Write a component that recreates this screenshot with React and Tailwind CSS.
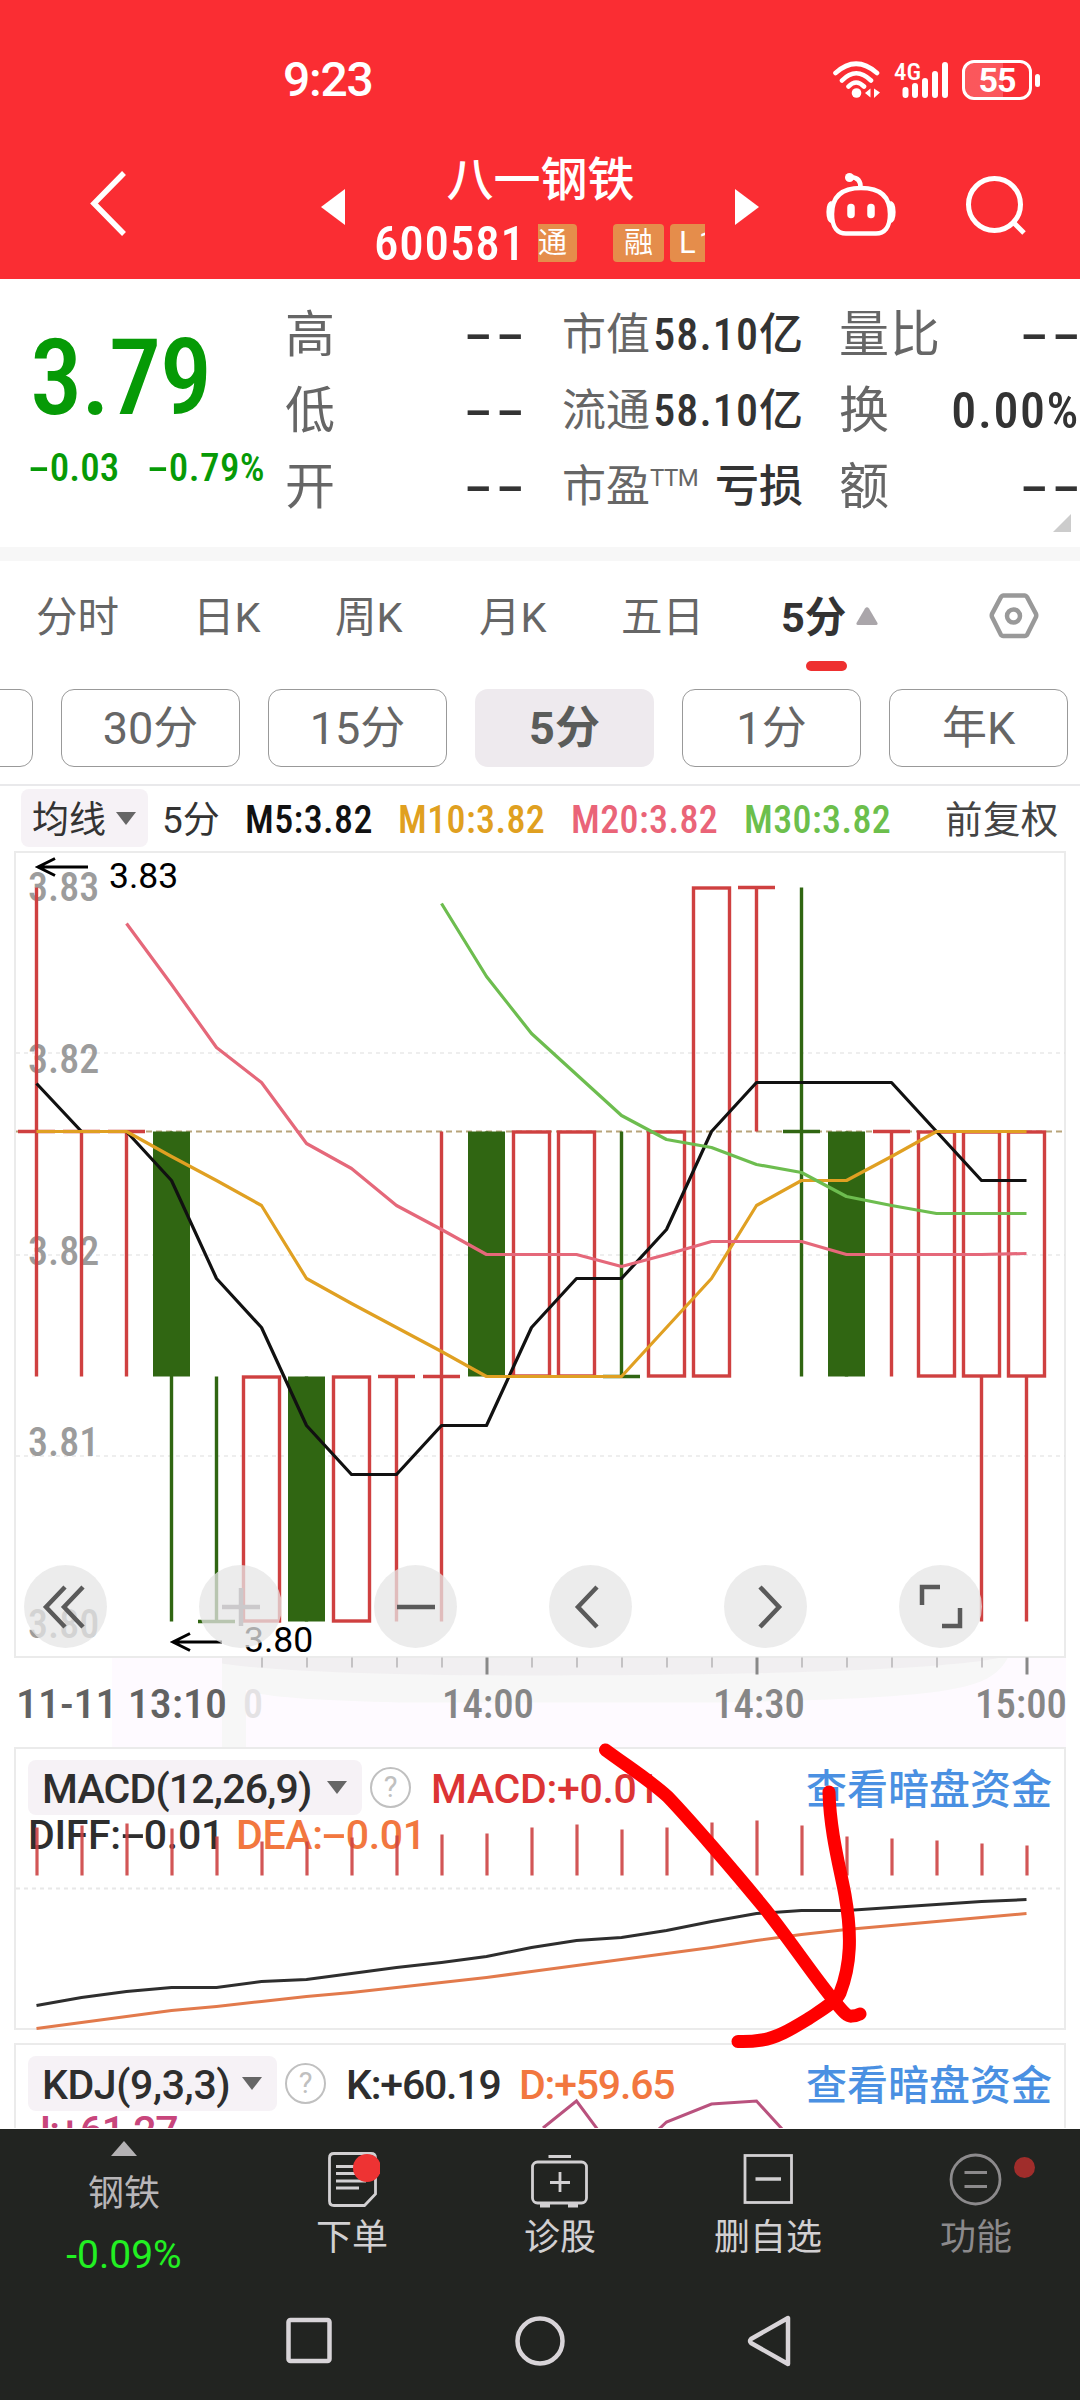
import React from "react";

const X = (i) => 36.5 + 45 * i;
const line = (start, ys) => ys.map((y, k) => `${X(start + k)},${y}`).join(" ");

// Price levels of the main chart, in chart pixels.
const P83 = 888;
const P82 = 1132;
const P81 = 1377;
const P80 = 1622;

// [kind, body top, body bottom, wick top, wick bottom]
const CANDLES = [
  ["redDash", P82, P82, P83, P81],
  ["redDash", P82, P82, P82, P81],
  ["redDash", P82, P82, P82, P81],
  ["green", P82, P81, P82, P80],
  ["greenDash", P80, P80, P81, P80],
  ["red", P81, P80, 0, 0],
  ["green", P81, P80, P81, P80],
  ["red", P81, P80, 0, 0],
  ["redDash", P81, P81, P81, P80],
  ["redDash", P81, P81, P82, P80],
  ["green", P82, P81, P82, P81],
  ["red", P82, P81, 0, 0],
  ["red", P82, P81, 0, 0],
  ["greenDash", P81, P81, P82, P81],
  ["red", P82, P81, 0, 0],
  ["red", P83, P81, 0, 0],
  ["redDash", P83, P83, P83, P82],
  ["greenDash", P82, P82, P83, P81],
  ["green", P82, P81, P82, P81],
  ["redDash", P82, P82, P82, P81],
  ["red", P82, P81, 0, 0],
  ["red", P82, P81, P81, P80],
  ["red", P82, P81, P81, P80],
];

const M5 = [1084, 1132, 1132, 1181, 1279, 1328, 1426, 1475, 1475, 1426, 1426, 1328, 1279, 1279, 1230, 1132, 1083, 1083, 1083, 1083, 1132, 1181, 1181];
const M10 = [1132, 1132, 1132, 1157, 1181, 1206, 1279, 1304, 1328, 1352, 1377, 1377, 1377, 1377, 1328, 1279, 1206, 1181, 1181, 1157, 1132, 1132, 1132];
const M20 = [924, 985, 1048, 1083, 1144, 1169, 1206, 1230, 1255, 1255, 1255, 1267, 1255, 1242, 1242, 1242, 1255, 1255, 1255, 1255, 1254];
const M30 = [904, 977, 1034, 1075, 1116, 1140, 1148, 1165, 1173, 1197, 1206, 1214, 1214, 1214];

const HIST = [1828, 1826, 1824, 1829, 1837, 1842, 1842, 1838, 1836, 1835, 1834, 1828, 1825, 1830, 1828, 1823, 1821, 1826, 1837, 1839, 1841, 1844, 1846];
const DIFF = [2006, 1998, 1992, 1988, 1988, 1982, 1980, 1974, 1968, 1963, 1957, 1948, 1941, 1938, 1931, 1922, 1914, 1911, 1911, 1908, 1905, 1902, 1900];
const DEA = [2029, 2023, 2017, 2011, 2007, 2002, 1997, 1993, 1988, 1983, 1978, 1972, 1966, 1960, 1954, 1948, 1941, 1935, 1930, 1926, 1922, 1918, 1914];

function Minus() {
  return (
    <span className="inline-block w-[0.56em] text-center">
      <span className="inline-block scale-x-[1.9]">-</span>
    </span>
  );
}

function Blank({ className = "" }) {
  return (
    <span className={`flex justify-between w-[54px] text-[48px] font-medium text-[#333] ${className}`}>
      <span className="w-[22px] text-center"><span className="inline-block scale-x-[2]">-</span></span>
      <span className="w-[22px] text-center"><span className="inline-block scale-x-[2]">-</span></span>
    </span>
  );
}

function Down({ className = "" }) {
  return (
    <svg className={className} width="20" height="13" viewBox="0 0 20 13">
      <path d="M0 0H20L10 13Z" fill="#666" />
    </svg>
  );
}

function StatusBar() {
  return (
    <div className="flex h-[160px] items-center pl-[283px] pr-[40px]">
      <span className="text-[48px] font-medium leading-none tracking-[-1.2px] [font-stretch:100%]">9:23</span>
      <div className="ml-auto flex items-center">
        <svg width="48" height="38" viewBox="832 60 48 38" fill="none" stroke="#fff" strokeWidth="4.6" strokeLinecap="round">
          <path d="M834.5 72Q855 53.500 876 72M841 79.500Q855 65 870 79.500M847.500 85.500Q855 77.500 863 85.500" />
          <circle cx="855.500" cy="92" r="4.800" fill="#fff" stroke="none" />
          <path d="M864 92L869.500 87.500V96.500ZM879 91.500L873 87.500V97Z" fill="#fff" stroke="none" />
        </svg>
        <svg className="ml-[12px]" width="57" height="44" viewBox="892 57 57 44">
          <text x="893" y="79" fontSize="24" fontWeight="500" fill="#fff" textLength="27" lengthAdjust="spacingAndGlyphs">4G</text>
          <path d="M904.500 89V94M914 85V94M924 80V94M934 73V94M944 64V94" stroke="#fff" strokeWidth="6" strokeLinecap="round" />
        </svg>
        <div className="ml-[12px] flex h-[40px] w-[70px] items-center justify-center rounded-[12px] border-[3px] border-white bg-linear-to-r from-white/20 from-60% to-transparent to-60%">
          <span className="text-[34px] font-bold leading-none tracking-[-1px] [font-stretch:100%]">55</span>
        </div>
        <div className="ml-[3px] h-[13px] w-[5px] rounded-[3px] bg-white" />
      </div>
    </div>
  );
}

function TitleBar() {
  return (
    <div className="flex h-[119px] items-start pt-[1px]">
      <svg className="ml-[88px] mt-[8px]" width="40" height="70" viewBox="88 170 40 70">
        <path d="M124 174L94 204.500L124 235" fill="none" stroke="#fff" strokeWidth="5.500" />
      </svg>
      <svg className="ml-[193px] mt-[28px]" width="24" height="36" viewBox="0 0 24 36"><path d="M24 0V36L0 18Z" fill="#fff" /></svg>
      <div className="ml-[29px] w-[333px] flex-none">
        <div className="-mt-[5px] text-center text-[47px] font-medium leading-[48px]">八一钢铁</div>
        <div className="mt-[14px] flex h-[50px] items-center">
          <span className="w-[164px] flex-none text-[49px] font-medium leading-none tracking-[0.8px]">600581</span>
          <div className="flex h-[38px] w-[167px] flex-none overflow-hidden text-[29px] leading-[38px]">
            <span className="w-[39px] flex-none rounded-r-[4px] bg-[#e58d4b]">通</span>
            <span className="ml-[36px] w-[51px] flex-none rounded-[4px] bg-[#e58d4b] text-center">融</span>
            <span className="ml-[6px] w-[51px] flex-none rounded-l-[4px] bg-[#e58d4b] pl-[9px] text-[31px] tracking-[3px] [font-stretch:100%]">L1</span>
          </div>
        </div>
      </div>
      <svg className="ml-[28px] mt-[28px]" width="24" height="36" viewBox="0 0 24 36"><path d="M0 0V36L24 18Z" fill="#fff" /></svg>
      <svg className="ml-[65px] mt-[9px]" width="74" height="68" viewBox="824 171 74 68" fill="none" stroke="#fff" strokeWidth="4.500">
        <path d="M861 189C882 189 890 199 890 215C890 229 884 234.500 876 234.500H846C838 234.500 832 229 832 215C832 199 840 189 861 189Z" />
        <path d="M860.500 189C861 182 858 178.500 851 178" />
        <circle cx="849.500" cy="178.500" r="4.500" fill="#fff" stroke="none" />
        <path d="M832 204C827.500 205 827.500 221 832 222M890 204C894.500 205 894.500 221 890 222" />
        <path d="M851 208.500V215.500M871 208.500V215.500" strokeWidth="7.500" strokeLinecap="round" />
      </svg>
      <svg className="ml-[66px] mt-[13px]" width="62" height="62" viewBox="964 175 62 62" fill="none" stroke="#fff" strokeWidth="5">
        <circle cx="994.500" cy="205.500" r="26" />
        <path d="M1014 224L1024 234" />
      </svg>
    </div>
  );
}

function Quote() {
  const label = "text-[50px] text-[#666]";
  const small = "text-[44px] text-[#666]";
  const value = "text-[44px] font-medium text-[#333]";
  return (
    <div className="relative flex h-[268px] leading-[76px]">
      <div className="ml-[30px] w-[255px] flex-none text-[#069a06]">
        <div className="mt-[48px] text-[105px] font-medium leading-[104px] tracking-[-1.5px]">3.79</div>
        <div className="mt-[16px] flex text-[39px] font-medium leading-[42px] whitespace-nowrap">
          <span className="-ml-[2px] w-[119px]"><Minus />0.03</span>
          <span className="tracking-[0.4px]"><Minus />0.79%</span>
        </div>
      </div>
      <div className="mt-[18px] w-[236px] flex-none">
        {["高", "低", "开"].map((t) => (
          <div key={t} className="flex h-[76px] justify-between"><span className={label}>{t}</span><Blank /></div>
        ))}
      </div>
      <div className="ml-[41px] mt-[18px] w-[241px] flex-none whitespace-nowrap">
        {["市值", "流通"].map((t) => (
          <div key={t} className="flex h-[76px] justify-between"><span className={small}>{t}</span><span className={value}><span className="tracking-[1.1px]">58.10</span>亿</span></div>
        ))}
        <div className="flex h-[76px]">
          <span className={small}>市盈</span>
          <span className="text-[24px] leading-[58px] text-[#666] tracking-[-0.5px] [font-stretch:100%]">TTM</span>
          <span className={`${value} ml-auto`}>亏损</span>
        </div>
      </div>
      <div className="ml-[36px] mt-[18px] w-[238px] flex-none">
        <div className="flex h-[76px] justify-between"><span className={`${label} tracking-[1px]`}>量比</span><Blank /></div>
        <div className="flex h-[76px] justify-between"><span className={label}>换</span><span className="-mr-[3px] text-[50px] font-medium text-[#333] tracking-[1.6px]">0.00%</span></div>
        <div className="flex h-[76px] justify-between"><span className={label}>额</span><Blank /></div>
      </div>
      <svg className="absolute right-[9px] bottom-[15px]" width="18" height="18" viewBox="0 0 18 18"><path d="M18 0V18H0Z" fill="#ccc" /></svg>
    </div>
  );
}

function Tabs() {
  return (
    <div className="flex h-[128px] items-start text-[41.500px] leading-[113px] text-[#666] [font-stretch:100%]">
      <span className="ml-[36px] w-[157px]">分时</span>
      <span className="w-[142px]">日K</span>
      <span className="w-[144px]">周K</span>
      <span className="w-[142px]">月K</span>
      <span className="w-[160px]">五日</span>
      <div className="relative w-[75px] whitespace-nowrap font-bold text-[#333]">
        5分
        <span className="absolute left-[25px] top-[100px] h-[10px] w-[41px] rounded-full bg-[#ee3030]" />
      </div>
      <svg className="mt-[46px]" width="22" height="18" viewBox="0 0 22 18"><path d="M9 1.500Q11 -1 13 1.500L21.500 16Q22 18 20 18H2Q0 18 0.500 16Z" fill="#aaa6aa" /></svg>
      <svg className="ml-[111px] mt-[31px]" width="50" height="48" viewBox="989 592 50 48" fill="none" stroke="#999" strokeWidth="4.500">
        <path d="M1003 595.500H1025Q1026 595.500 1027 597L1036 614Q1036.500 615.500 1036 617L1027 635Q1026 636 1025 636H1003Q1002 636 1001 635L992 617Q991.500 615.500 992 614L1001 597Q1002 595.500 1003 595.500Z" />
        <circle cx="1013.500" cy="616" r="6.500" />
      </svg>
    </div>
  );
}

function Periods() {
  const box = "flex h-[78px] w-[179px] flex-none items-center justify-center rounded-[13px] pt-[2px] text-[45px] [font-stretch:100%]";
  return (
    <div className="flex h-[95px] gap-[28px] overflow-hidden text-[#666]">
      <div className="-ml-[146px] h-[78px] w-[179px] flex-none rounded-[13px] border-[1.500px] border-[#999]" />
      <div className={`${box} border-[1.500px] border-[#999]`}>30分</div>
      <div className={`${box} border-[1.500px] border-[#999]`}>15分</div>
      <div className={`${box} bg-[#eeeaee] font-bold text-[#5a5c5a]`}>5分</div>
      <div className={`${box} border-[1.500px] border-[#999]`}>1分</div>
      <div className={`${box} border-[1.500px] border-[#999]`}>年K</div>
    </div>
  );
}

function Averages() {
  return (
    <div className="flex h-[67px] items-start border-t-2 border-[#e9e9eb] pt-[3px] text-[38px] leading-[63px] whitespace-nowrap tracking-[0.4px]">
      <div className="ml-[21px] flex h-[58px] w-[127px] flex-none items-center rounded-[8px] bg-[#f6f2f6] pl-[11px] text-[37px] tracking-normal text-[#333]">
        <span className="pt-[4px]">均线</span><Down className="ml-[10px]" />
      </div>
      <span className="ml-[14px] w-[83px] flex-none text-[37px] tracking-normal text-[#333] [font-stretch:100%]">5分</span>
      <span className="w-[153px] flex-none font-medium text-[#111]">M5:3.82</span>
      <span className="w-[173px] flex-none font-medium text-[#e0a020]">M10:3.82</span>
      <span className="w-[173px] flex-none font-medium text-[#ea6478]">M20:3.82</span>
      <span className="w-[201px] flex-none font-medium text-[#6cbf4c]">M30:3.82</span>
      <span className="text-[37.500px] text-[#444]">前复权</span>
    </div>
  );
}

function RoundButton({ children }) {
  return (
    <button className="flex h-[83px] w-[83px] items-center justify-center rounded-full bg-[#e6e6e6]/75">
      <svg width="48" height="48" viewBox="-24 -24 48 48" fill="none" stroke="#5a5a5a" strokeWidth="4.500">{children}</svg>
    </button>
  );
}

function Candle({ c, i }) {
  const [kind, top, bottom, w1, w2] = c;
  const x = X(i);
  const color = kind.startsWith("red") ? "#cf4040" : "#306612";
  return (
    <g stroke={color} strokeWidth="3.4" fill="none">
      {w2 > w1 && <path d={`M${x} ${w1}V${w2}`} />}
      {kind === "green" && <rect x={x - 18.5} y={top} width="37" height={bottom - top} fill={color} stroke="none" />}
      {kind === "red" && <rect x={x - 18} y={top + 0.5} width="36" height={bottom - top - 1} />}
      {kind.endsWith("Dash") && <path d={`M${x - 18.5} ${top}H${x + 18.5}`} />}
    </g>
  );
}

function PriceChart() {
  return (
    <div className="relative h-[896px]">
      <svg className="block font-medium" width="1080" height="896" viewBox="0 851.5 1080 896" fill="none">
        <path d="M112 1658H1066V1748H112Z" fill="#fefaff" />
        <path d="M222 1658H1008C990 1690 960 1698 720 1703H400Q260 1700 246 1690V1748H222Z" fill="#f7f7f7" />
        <path d="M222 1658H1000C960 1668 800 1676 540 1676C360 1676 260 1670 222 1664Z" fill="#f1eff1" />
        <rect x="15" y="852.500" width="1050" height="805" stroke="#ebebeb" strokeWidth="2" />
        <path d="M16 1053.500H1065M16 1255.500H1065M16 1456.500H1065" stroke="#dedede" strokeWidth="1.200" strokeDasharray="4 4" />
        <path d="M16 1132H1065" stroke="#b8a47a" strokeWidth="2" strokeDasharray="6 4" />
        <g fill="#9c9c9c" fontSize="40">
          <text x="28" y="901">3.83</text>
          <text x="28" y="1073">3.82</text>
          <text x="28" y="1265">3.82</text>
          <text x="28" y="1456">3.81</text>
          <text x="28" y="1638">3.80</text>
        </g>
        {CANDLES.map((c, i) => <Candle key={i} c={c} i={i} />)}
        <g strokeWidth="3.2" strokeLinejoin="round">
          <polyline points={line(0, M5)} stroke="#111" />
          <polyline points={line(0, M10)} stroke="#e0a022" />
          <polyline points={line(2, M20)} stroke="#e5687a" />
          <polyline points={line(9, M30)} stroke="#6dbd4f" />
        </g>
        <g stroke="#000" strokeWidth="3">
          <path d="M88 867.500H38M55 859L38 867.500L55 876" />
          <path d="M222 1642.500H173M190 1634L173 1642.500L190 1651" />
        </g>
        <g className="[font-stretch:100%]" fill="#000" fontSize="35.500" fontWeight="400">
          <text x="109" y="888">3.83</text>
          <text x="244" y="1652">3.80</text>
        </g>
        {Array.from({ length: 18 }, (_, k) => k + 5).map((i) => {
          const major = i === 10 || i === 16 || i === 22;
          return <path key={i} d={`M${X(i) + 0.5} 1658V${major ? 1675 : 1668}`} stroke={major ? "#888" : "#c4c2c4"} strokeWidth={major ? 3 : 2} />;
        })}
        <g fontSize="40" fill="#868686">
          <text x="16" y="1718" fill="#626262" textLength="211" lengthAdjust="spacingAndGlyphs">11-11 13:10</text>
          <text x="243" y="1718" fill="#e4e2e4">0</text>
          <text x="442" y="1718" textLength="92" lengthAdjust="spacingAndGlyphs">14:00</text>
          <text x="713" y="1718" textLength="92" lengthAdjust="spacingAndGlyphs">14:30</text>
          <text x="975" y="1718" textLength="92" lengthAdjust="spacingAndGlyphs">15:00</text>
        </g>
      </svg>
      <div className="absolute left-[24px] top-[714px] flex gap-[92px]">
        <RoundButton><path d="M-1 -20L-20 0L-1 20M17 -20L-2 0L17 20" /></RoundButton>
        <RoundButton><path d="M-19 0H19M0 -19V19" stroke="#cbc9cb" /></RoundButton>
        <RoundButton><path d="M-19 0H19" /></RoundButton>
        <RoundButton><path d="M6 -20L-13 0L6 20" /></RoundButton>
        <RoundButton><path d="M-6 -20L13 0L-6 20" /></RoundButton>
        <RoundButton><path d="M-19 -2V-20H-1M1 19H19V1" /></RoundButton>
      </div>
    </div>
  );
}

function Help() {
  return (
    <span className="ml-[8px] flex h-[41px] w-[41px] flex-none items-center justify-center rounded-full border-[2.500px] border-[#c0c0c0] text-[29px] font-normal leading-none text-[#c0c0c0]">?</span>
  );
}

function DarkPoolLink() {
  return <span className="absolute right-[12px] top-[3px] font-medium text-[#4a90e2]">查看暗盘资金</span>;
}

function MacdPanel() {
  return (
    <div className="relative mx-[14px] h-[283px] border-2 border-[#ebebeb] text-[41px] font-medium whitespace-nowrap [font-stretch:100%]">
      <svg className="absolute -left-[2px] -top-[2px]" width="1052" height="283" viewBox="14 1747.5 1052 283" fill="none">
        <path d="M16 1889H1064" stroke="#e8e8e8" strokeWidth="2" strokeDasharray="4 4" />
      </svg>
      <div className="relative mt-[11px] flex h-[55px] items-center pl-[12px] leading-[55px]">
        <div className="flex h-[55px] w-[334px] flex-none items-center rounded-[8px] bg-[#f6f2f6] pl-[14px] text-[#2e2e2e]">
          <span className="w-[285px] pt-[3px] tracking-[-0.8px]">MACD(12,26,9)</span><Down />
        </div>
        <Help />
        <span className="ml-[20px] pt-[3px] text-[#dc3434] tracking-[-0.3px]">MACD:+0.01</span>
        <DarkPoolLink />
      </div>
      <div className="relative ml-[12px] flex h-[36px] leading-[40px] tracking-[-0.3px]">
        <span className="w-[208px] text-[#2e2e2e]">DIFF:<Minus />0.01</span>
        <span className="text-[#f2773f]">DEA:<Minus />0.01</span>
      </div>
      <svg className="absolute -left-[2px] -top-[2px]" width="1052" height="283" viewBox="14 1747.5 1052 283" fill="none">
        {HIST.map((y, i) => <path key={i} d={`M${X(i) + 0.5} ${y}V1876`} stroke="#cd4444" strokeOpacity="0.9" strokeWidth="3.2" />)}
        <polyline points={line(0, DIFF)} stroke="#2e2e2e" strokeWidth="3" />
        <polyline points={line(0, DEA)} stroke="#e27a4c" strokeWidth="3" />
      </svg>
    </div>
  );
}

function KdjPanel() {
  return (
    <div className="relative mx-[14px] mt-[13px] h-[85px] overflow-hidden border-2 border-b-0 border-[#ebebeb] text-[41px] font-medium whitespace-nowrap [font-stretch:100%]">
      <svg className="absolute -left-[2px] -top-[2px]" width="1052" height="85" viewBox="14 2044 1052 85" fill="none" stroke="#b9527e" strokeWidth="3">
        <path d="M543 2129L576.500 2102L598 2131M658 2131L666.500 2123L711.500 2105L756.500 2102L783 2131" />
      </svg>
      <div className="relative mt-[11px] flex h-[55px] items-center pl-[12px] leading-[55px]">
        <div className="flex h-[55px] w-[249px] flex-none items-center rounded-[8px] bg-[#f6f2f6] pl-[14px] text-[#2e2e2e]">
          <span className="w-[200px] pt-[3px] tracking-[-0.4px]">KDJ(9,3,3)</span><Down />
        </div>
        <Help />
        <span className="ml-[20px] w-[173px] pt-[3px] text-[#2e2e2e] tracking-[-1.2px]">K:+60.19</span>
        <span className="pt-[3px] text-[#f2773f] tracking-[-1.2px]">D:+59.65</span>
        <DarkPoolLink />
      </div>
      <div className="ml-[12px] h-[36px] leading-[40px] text-[#c8467c] tracking-[-1.5px]">J:+61.27</div>
    </div>
  );
}

function Scribble() {
  return (
    <svg className="pointer-events-none absolute left-[590px] top-[1735px]" width="290" height="325" viewBox="590 1735 290 325" fill="none" stroke="#ff0000" strokeWidth="13" strokeLinecap="round" strokeLinejoin="round">
      <path d="M605.500 1750C630 1768 652 1782 668 1797C690 1820 735 1872 766 1910C795 1947 815 1978 836 2003C844 2013 848 2017 852 2016Q856 2016 860 2014" />
      <path d="M829 1792C830 1832 840 1868 845 1895C852 1935 851 1965 840 1993C836 2002 820 2011 808 2019C790 2030 776 2038 762 2040Q750 2042 738 2041.500" />
    </svg>
  );
}

function Toolbar() {
  const item = "relative flex w-[208px] flex-col items-center text-[36px] leading-[50px] text-[#d2d0d2]";
  return (
    <div className="flex h-[152px] pt-[12px]">
      <div className="flex w-[248px] flex-col items-center text-[36px] leading-[50px] text-[#b8b6b8]">
        <svg width="26" height="15" viewBox="0 0 26 15"><path d="M13 0L26 15H0Z" fill="#b4b2b4" /></svg>
        <span className="mt-[13px]">钢铁</span>
        <span className="mt-[11px] text-[39px] text-[#22f022] [font-stretch:100%]">-0.09%</span>
      </div>
      <div className={item}>
        <svg className="mt-[9px]" width="56" height="58" viewBox="324 2150 56 58" fill="none" stroke="#d2d0d2" strokeWidth="2.800">
          <path d="M334 2153.500H371Q375.500 2153.500 375.500 2158V2194L364.500 2205.500H334Q329.500 2205.500 329.500 2201V2158Q329.500 2153.500 334 2153.500Z" />
          <path d="M336 2166.500H366M336 2173.500H366M336 2181H366M336 2188H359" />
          <circle cx="367" cy="2168" r="14" fill="#ee3333" stroke="none" />
        </svg>
        <span className="mt-[5px]">下单</span>
      </div>
      <div className={item}>
        <svg className="mt-[9px]" width="60" height="58" viewBox="530 2150 60 58" fill="none" stroke="#d2d0d2" strokeWidth="2.800">
          <rect x="532.500" y="2162" width="54" height="41" rx="5" />
          <path d="M548.500 2156.500H571M560 2172V2192M550 2182.500H570" />
          <path d="M540 2205.500H550M568 2205.500H578" strokeWidth="4" />
        </svg>
        <span className="mt-[5px]">诊股</span>
      </div>
      <div className={item}>
        <svg className="mt-[9px]" width="56" height="58" viewBox="739 2150 56 58" fill="none" stroke="#d2d0d2" strokeWidth="2.800">
          <rect x="744" y="2155.500" width="46.500" height="47" />
          <path d="M754.500 2179H780" strokeWidth="3.500" />
        </svg>
        <span className="mt-[5px]">删自选</span>
      </div>
      <div className={`${item} text-[#8c8a8c]!`}>
        <svg className="mt-[9px]" width="56" height="58" viewBox="948 2150 56 58" fill="none" stroke="#8c8a8c" strokeWidth="2.800">
          <circle cx="975.500" cy="2179.500" r="24.500" />
          <path d="M964.500 2172.500H987M964.500 2186.500H987" />
        </svg>
        <span className="mt-[5px]">功能</span>
        <span className="absolute left-[142px] top-[16px] h-[21px] w-[21px] rounded-full bg-[#a02d2b]" />
      </div>
    </div>
  );
}

function SystemNav() {
  return (
    <div className="flex h-[119px] items-start pt-[32px]">
      <svg className="ml-[284px]" width="50" height="56" viewBox="0 0 50 56" fill="none" stroke="#d8d4d8" strokeWidth="4.500"><rect x="4.500" y="7" width="41" height="41" rx="2" /></svg>
      <svg className="ml-[180px]" width="52" height="56" viewBox="0 0 52 56" fill="none" stroke="#d8d4d8" strokeWidth="4.500"><circle cx="26" cy="28" r="22.500" /></svg>
      <svg className="ml-[180px]" width="48" height="56" viewBox="0 0 48 56" fill="none" stroke="#d8d4d8" strokeWidth="4.500" strokeLinejoin="round"><path d="M42 5V51L5 30Q3 28 5 26Z" /></svg>
    </div>
  );
}

export default function App() {
  return (
    <div className="relative flex h-[2400px] w-[1080px] flex-col overflow-hidden bg-white font-['Roboto','Noto_Sans_CJK_SC',sans-serif] [font-stretch:87.5%]">
      <header className="h-[279px] flex-none bg-[#fa2d33] text-white">
        <StatusBar />
        <TitleBar />
      </header>
      <Quote />
      <div className="h-[14px] flex-none bg-[#f7f7f7]" />
      <Tabs />
      <Periods />
      <Averages />
      <main className="h-[1278px] flex-none overflow-hidden">
        <PriceChart />
        <MacdPanel />
        <KdjPanel />
      </main>
      <footer className="h-[271px] flex-none bg-[#222421]">
        <Toolbar />
        <SystemNav />
      </footer>
      <Scribble />
    </div>
  );
}
